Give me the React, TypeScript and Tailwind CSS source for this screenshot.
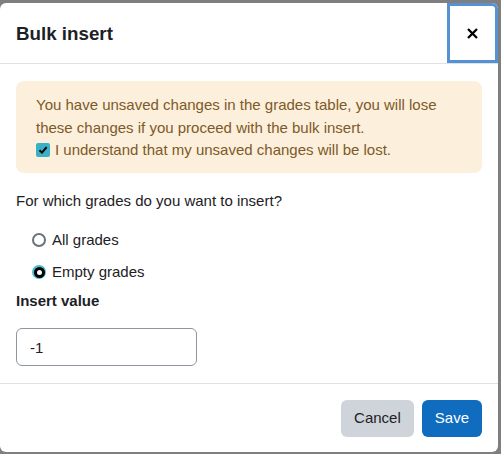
// 成績表の一括入力モーダル（静的な再現）。

import React, { useState } from 'react';

const Radio: React.FC<{ checked: boolean }> = ({ checked }) =>
  checked ? (
    <span className="w-[14px] h-[14px] rounded-full bg-[#4eb9cc] p-[1.5px] flex">
      <span className="flex-1 rounded-full border-[3px] border-black bg-white" />
    </span>
  ) : (
    <span className="w-[14px] h-[14px] rounded-full bg-white border-2 border-[#6a737b]" />
  );

const BulkInsertModal: React.FC = () => {
  const [understood, setUnderstood] = useState(true);
  const [target, setTarget] = useState<'all' | 'empty'>('empty');

  return (
    <div className="w-[498px] h-[449px] mt-[3px] bg-white rounded-[6px] flex flex-col text-[#1d2125]">
      {/* ヘッダー */}
      <div className="h-[61px] shrink-0 border-b border-[#dee2e6] flex items-center justify-between">
        <h5 className="pl-4 pt-[2px] text-[18.75px] font-bold leading-none">Bulk insert</h5>
        <button
          className="w-[51px] h-[60px] self-start border-[3px] border-[#5592d2] rounded-tr-[6px] flex items-center justify-center text-black"
          aria-label="Close"
        >
          <svg width="11" height="11" viewBox="0 0 11 11">
            <path d="M1 1L10 10M10 1L1 10" stroke="#000" strokeWidth="2.3" />
          </svg>
        </button>
      </div>

      {/* ボディ */}
      <div className="flex-1 px-4 pt-[17px]">
        <div className="bg-[#fcefdc] text-[#7d5a29] rounded-[8px] px-5 pt-[13px] pb-[11px] leading-[22.5px]">
          <p>You have unsaved changes in the grades table, you will lose these changes if you proceed with the bulk insert.</p>
          <label className="flex items-center gap-[5px] cursor-pointer">
            <span
              onClick={() => setUnderstood(!understood)}
              className={`w-[14px] h-[14px] rounded-[2px] flex items-center justify-center ${understood ? 'bg-[#3ab0c6]' : 'bg-white border border-[#767676]'}`}
            >
              {understood && (
                <svg width="10" height="10" viewBox="0 0 10 10">
                  <path d="M1.5 5.2L4 7.6L8.6 2.2" stroke="#000" strokeWidth="2" fill="none" />
                </svg>
              )}
            </span>
            I understand that my unsaved changes will be lost.
          </label>
        </div>

        <p className="mt-[17px] leading-[22.5px]">For which grades do you want to insert?</p>

        <div className="mt-[17px] pl-4 flex flex-col gap-[9.5px]">
          <label className="flex items-center gap-[6px] leading-[22.5px]" onClick={() => setTarget('all')}>
            <Radio checked={target === 'all'} />
            All grades
          </label>
          <label className="flex items-center gap-[6px] leading-[22.5px]" onClick={() => setTarget('empty')}>
            <Radio checked={target === 'empty'} />
            Empty grades
          </label>
        </div>

        <p className="mt-[6px] font-bold leading-[22.5px]">Insert value</p>
        <input
          defaultValue="-1"
          className="mt-[16px] w-[181px] h-[38px] border border-[#8f959e] rounded-[6px] px-[13px] text-[#1d2125] outline-none"
        />
      </div>

      {/* フッター */}
      <div className="h-[69px] shrink-0 border-t border-[#dee2e6] flex items-start justify-end gap-2 pt-4 pr-4">
        <button className="h-[37px] px-[13px] bg-[#ced4da] text-[#1d2125] rounded-[6px]">Cancel</button>
        <button className="h-[37px] px-[13px] bg-[#0f6cbf] text-white rounded-[6px]">Save</button>
      </div>
    </div>
  );
};

export default function App() {
  return (
    <div className="w-[501px] h-[454px] bg-[#7f7f7f] overflow-hidden text-[15px] font-['Liberation_Sans',Arial,sans-serif]">
      <BulkInsertModal />
    </div>
  );
}
